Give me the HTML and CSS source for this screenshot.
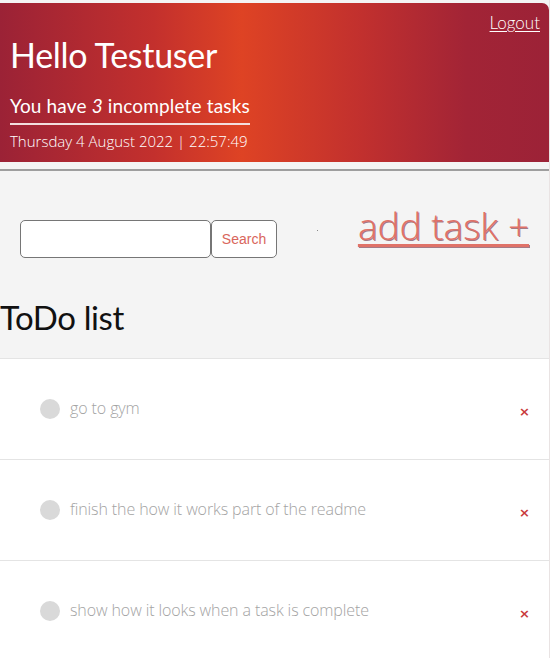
FILE: index.html
```html
<!DOCTYPE html>
<html>
<head>
<meta charset="utf-8">
<link rel="stylesheet" href="styles.css">
</head>
<body>
<div class="app">
  <header class="hero">
    <div class="hero-top"><a class="logout" href="#">Logout</a></div>
    <h1 class="hello">Hello Testuser</h1>
    <p class="count">You have <em>3</em> incomplete tasks</p>
    <p class="date">Thursday 4 August 2022 | 22:57:49</p>
  </header>
  <div class="divider"></div>
  <section class="controls">
    <form class="search">
      <input class="search-input" type="text">
      <button class="search-btn" type="button">Search</button>
    </form>
    <span class="dot"></span>
    <a class="add-task" href="#">add task +</a>
  </section>
  <h2 class="list-title">ToDo list</h2>
  <ul class="tasks">
    <li class="task"><span class="check"></span><span class="task-text">go to gym</span><span class="remove">×</span></li>
    <li class="task"><span class="check"></span><span class="task-text">finish the how it works part of the readme</span><span class="remove">×</span></li>
    <li class="task"><span class="check"></span><span class="task-text">show how it looks when a task is complete</span><span class="remove">×</span></li>
  </ul>
</div>
</body>
</html>
```

FILE: styles.css
```css
* { box-sizing: border-box; }
html, body { margin: 0; padding: 0; background: #ffffff; }
body { font-family: "Lato", "Open Sans", sans-serif; }

.app {
  width: 550px;
  padding-top: 3px;
  background: #f4f4f4;
  border-right: 1px solid #e9e3e3;
  min-height: 658px;
}

.hero {
  height: 159px;
  border-radius: 0 7px 0 0;
  background: linear-gradient(to right, #9b2236 0%, #c3302d 28%, #de4324 44%, #c1302e 66%, #a22436 85%, #9c2237 100%);
  color: #ffffff;
  padding: 9px 9px 0 10px;
  display: flex;
  flex-direction: column;
  align-items: flex-start;
}
.hero-top { align-self: stretch; display: flex; justify-content: flex-end; }
.logout {
  color: #ffffff;
  font-size: 17px;
  line-height: 22px;
  font-weight: 300;
  text-decoration: underline;
  text-underline-offset: 2px;
}
.hello {
  margin: 1px 0 0 0;
  font-size: 34px;
  line-height: 40px;
  font-weight: 400;
  letter-spacing: -0.3px;
}
.count {
  margin: 19px 0 0 0;
  font-size: 19px;
  line-height: 24px;
  font-weight: 400;
  padding-bottom: 5px;
  border-bottom: 2px solid #f3dede;
  letter-spacing: 0.15px;
}
.count em { font-style: italic; }
.date {
  margin: 6px 0 0 0;
  font-family: "Open Sans", "Lato", sans-serif;
  font-size: 15px;
  line-height: 20px;
  font-weight: 300;
  letter-spacing: 0;
}

.divider {
  height: 2px;
  margin-top: 7px;
  background: #9e9e9e;
}

.controls {
  display: flex;
  align-items: center;
  height: 122px;
  padding: 14px 20px 0 20px;
}
.search { display: flex; }
.search-input {
  width: 191px;
  height: 38px;
  border: 1px solid #767676;
  border-radius: 5px;
  background: #ffffff;
  margin: 0;
}
.search-btn {
  width: 66px;
  height: 38px;
  border: 1px solid #767676;
  border-radius: 5px;
  background: #ffffff;
  color: #d9665c;
  font-family: "Liberation Sans", Arial, sans-serif;
  font-size: 14px;
  margin: 0;
  padding: 0;
}
.dot {
  width: 1px;
  height: 1px;
  background: #888;
  margin: -18px 0 0 40px;
}
.add-task {
  margin-left: auto;
  margin-top: -26px;
  color: #e07268;
  font-family: "Open Sans", "Lato", sans-serif;
  font-size: 37px;
  line-height: 44px;
  font-weight: 300;
  letter-spacing: 0;
  text-decoration: underline;
  text-decoration-thickness: 3px;
  text-underline-offset: 4px;
  text-shadow: 1px 1px 0 rgba(110, 40, 60, 0.6);
}

.list-title {
  margin: 0;
  padding: 2px 0 0 0;
  height: 65px;
  font-size: 33px;
  line-height: 44px;
  font-weight: 400;
  color: #111111;
  letter-spacing: -0.4px;
}

.tasks { list-style: none; margin: 0; padding: 0; }
.task {
  height: 101px;
  background: #ffffff;
  border-top: 1px solid #e4e4e4;
  display: flex;
  align-items: center;
  padding: 0 21px 0 40px;
}
.check {
  width: 20px;
  height: 20px;
  border-radius: 50%;
  background: #d9d9d9;
  flex: none;
}
.task-text {
  margin-left: 10px;
  font-family: "Open Sans", "Lato", sans-serif;
  font-size: 16px;
  font-weight: 300;
  color: #a3a3a3;
  flex: 1;
  margin-top: -2px;
  letter-spacing: -0.1px;
}
.remove {
  color: #c93a3a;
  font-family: "DejaVu Sans", sans-serif;
  font-size: 13px;
  font-weight: 700;
  margin-top: 5px;
  margin-right: -2px;
}
```
